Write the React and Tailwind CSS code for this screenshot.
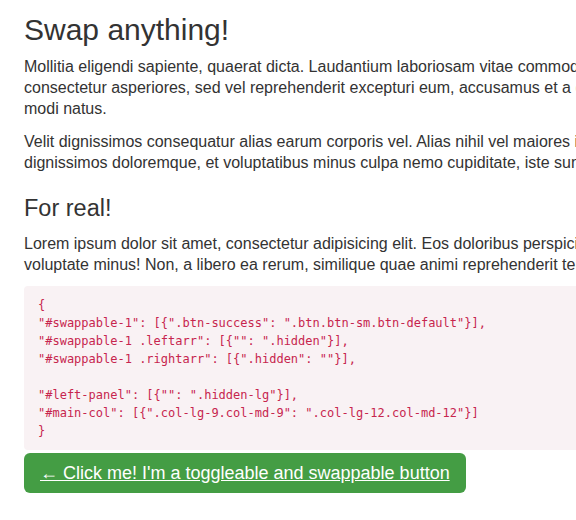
import React from "react";

const sans = { fontFamily: '"Liberation Sans", Arial, sans-serif' };

export default function App() {
  return (
    <div className="w-[576px] h-[520px] overflow-hidden bg-white">
      <div
        className="w-[760px] pl-[24px] text-[#333333] font-['Liberation_Sans',Arial,sans-serif]"
      >
        <h1 className="pt-[13px] text-[30px] leading-[1.1] font-normal">Swap anything!</h1>
        <p className="mt-[11px] text-[16px] leading-[20.8px] whitespace-nowrap">
          Mollitia eligendi sapiente, quaerat dicta. Laudantium laboriosam vitae commodi quis ipsam nobis,
          <br />
          consectetur asperiores, sed vel reprehenderit excepturi eum, accusamus et a dolorem
          <br />
          modi natus.
        </p>
        <p className="mt-[13px] text-[16px] leading-[20.8px] whitespace-nowrap">
          Velit dignissimos consequatur alias earum corporis vel. Alias nihil vel maiores illo,
          <br />
          dignissimos doloremque, et voluptatibus minus culpa nemo cupiditate, iste sunt.
        </p>
        <h2 className="mt-[22px] text-[23.5px] leading-[1.1] font-normal">For real!</h2>
        <p className="mt-[12px] text-[16px] leading-[20.8px] whitespace-nowrap">
          Lorem ipsum dolor sit amet, consectetur adipisicing elit. Eos doloribus perspiciatis
          <br />
          voluptate minus! Non, a libero ea rerum, similique quae animi reprehenderit tempore.
        </p>
        <pre className="mt-[11px] rounded-[4px] bg-[#f9f2f4] text-[#c7254e] pl-[14px] py-[10px] text-[12px] leading-[18px] font-['DejaVu_Sans_Mono',monospace]">
{`{
"#swappable-1": [{".btn-success": ".btn.btn-sm.btn-default"}],
"#swappable-1 .leftarr": [{"": ".hidden"}],
"#swappable-1 .rightarr": [{".hidden": ""}],

"#left-panel": [{"": ".hidden-lg"}],
"#main-col": [{".col-lg-9.col-md-9": ".col-lg-12.col-md-12"}]
}`}
        </pre>
        <button
          style={sans}
          className="mt-[3px] block h-[40px] rounded-[6px] bg-[#449d44] px-[16px] text-[18px] leading-[24px] text-white underline"
        >
          ← Click me! I'm a toggleable and swappable button
        </button>
      </div>
    </div>
  );
}
